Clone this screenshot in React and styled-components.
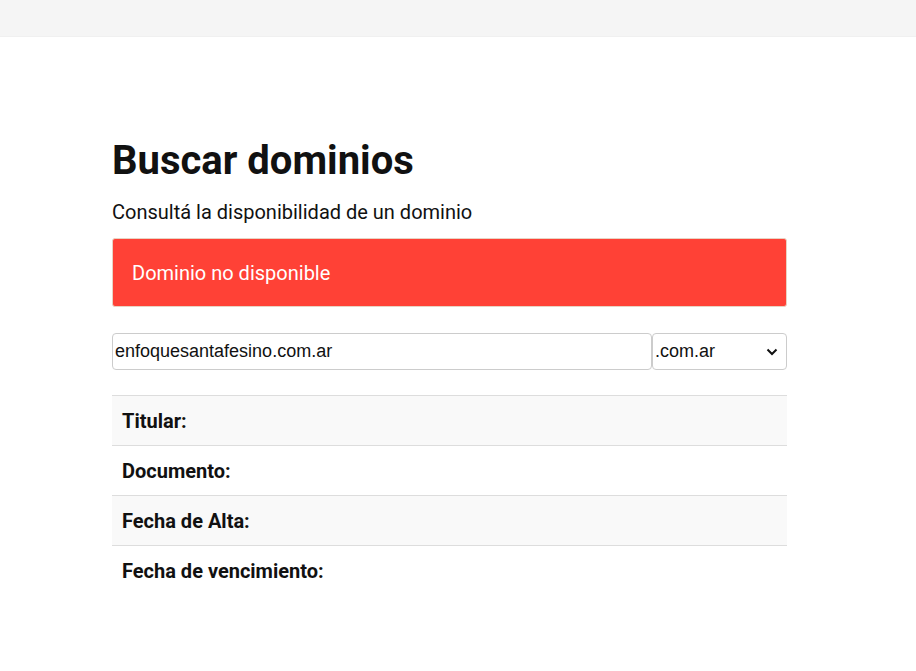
import React from 'react'
import styled, { createGlobalStyle } from 'styled-components'

const GlobalStyle = createGlobalStyle`
body {
    margin: 0;
    background: #fff;
    font-family: Roboto, "Noto Sans", sans-serif;
    color: #111;
}
`

const TopBar = styled.header`
height: 36px;
background: #f5f5f5;
border-bottom: 1px solid #f0f0f0;
`

const Main = styled.main`
width: 675px;
margin: 0 0 0 112px;
padding-top: 92px;
`

const Title = styled.h1`
margin: 0;
font-size: 40px;
font-weight: 700;
line-height: 64px;
color: #111;
`

const Lead = styled.p`
margin: 7px 0 0;
font-size: 20px;
line-height: 24px;
`

const Alert = styled.div`
margin-top: 14px;
height: 69px;
box-sizing: border-box;
display: flex;
align-items: center;
padding: 0 19px;
background: #ff4136;
border: 1px solid #e8d3c3;
border-radius: 3px;
color: #fff;
font-size: 20px;
`

const SearchRow = styled.form`
display: flex;
margin-top: 26px;
`

const DomainInput = styled.input`
flex: 1;
height: 37px;
box-sizing: border-box;
border: 1px solid #ccc;
border-radius: 4px;
padding: 0 2px;
font-family: "Liberation Sans", Arial, sans-serif;
font-size: 18px;
color: #111;
outline: none;
`

const ZoneSelect = styled.div`
width: 135px;
height: 37px;
box-sizing: border-box;
border: 1px solid #ccc;
border-radius: 4px;
display: flex;
align-items: center;
justify-content: space-between;
padding: 0 8px 0 2px;
font-family: "Liberation Sans", Arial, sans-serif;
font-size: 18px;
color: #111;
`

const Table = styled.div`
margin-top: 25px;
border-top: 1px solid #ddd;
`

const Row = styled.div`
height: 49px;
display: flex;
align-items: center;
padding: 0 10px;
background: ${p => (p.$striped ? '#f9f9f9' : '#fff')};
border-bottom: ${p => (p.$last ? 'none' : '1px solid #ddd')};
font-size: 20px;
font-weight: 700;
color: #111;
`

const fields = ['Titular:', 'Documento:', 'Fecha de Alta:', 'Fecha de vencimiento:']

export default function App() {
    return (
        <>
            <GlobalStyle />
            <TopBar />
            <Main>
                <Title>Buscar dominios</Title>
                <Lead>Consultá la disponibilidad de un dominio</Lead>
                <Alert>Dominio no disponible</Alert>
                <SearchRow onSubmit={e => e.preventDefault()}>
                    <DomainInput defaultValue="enfoquesantafesino.com.ar" />
                    <ZoneSelect>
                        .com.ar
                        <svg width="12" height="8" viewBox="0 0 12 8">
                            <path d="M1.5 1.5 6 6l4.5-4.5" fill="none" stroke="#111" strokeWidth="2" />
                        </svg>
                    </ZoneSelect>
                </SearchRow>
                <Table>
                    {fields.map((f, i) => (
                        <Row key={f} $striped={i % 2 === 0} $last={i === fields.length - 1}>{f}</Row>
                    ))}
                </Table>
            </Main>
        </>
    )
}
